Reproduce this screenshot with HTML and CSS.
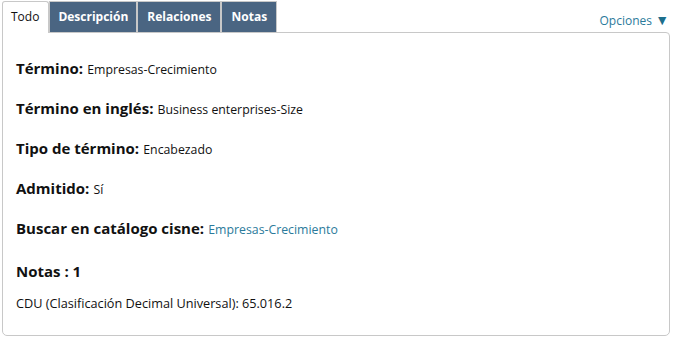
FILE: index.html
```html
<!DOCTYPE html>
<html lang="es">
<head>
<meta charset="utf-8">
<link rel="stylesheet" href="styles.css">
</head>
<body>
<div class="wrap">
  <div class="tabbar">
    <ul class="tabs">
      <li class="tab active">Todo</li>
      <li class="tab desc">Descripción</li>
      <li class="tab">Relaciones</li>
      <li class="tab">Notas</li>
    </ul>
    <a class="options" href="#">Opciones <span class="tri">▼</span></a>
  </div>
  <div class="panel">
    <p class="row"><span class="lbl">Término:</span> <span class="val">Empresas-Crecimiento</span></p>
    <p class="row"><span class="lbl">Término en inglés:</span> <span class="val">Business enterprises-Size</span></p>
    <p class="row"><span class="lbl">Tipo de término:</span> <span class="val">Encabezado</span></p>
    <p class="row"><span class="lbl">Admitido:</span> <span class="val">Sí</span></p>
    <p class="row"><span class="lbl">Buscar en catálogo cisne:</span> <a class="val link" href="#">Empresas-Crecimiento</a></p>
    <h3 class="notes-h">Notas : 1</h3>
    <p class="note">CDU (Clasificación Decimal Universal): 65.016.2</p>
  </div>
</div>
</body>
</html>
```
FILE: styles.css
```css
html, body { margin: 0; padding: 0; background: #fff; }
body { font-family: "Open Sans", Lato, sans-serif; color: #111; }
.wrap { width: 668px; padding: 1px 0 0 2px; }
.tabbar { display: flex; align-items: flex-end; justify-content: space-between; height: 31px; }
.tabs { display: flex; list-style: none; margin: 0; padding: 0; height: 31px; }
.tab {
  box-sizing: border-box; height: 31px; padding: 0 9px; line-height: 30px;
  font-size: 12px; font-weight: bold; color: #fff; background: #4a6582;
  border: 1px solid #c8c8c8; border-bottom: none;
}
.tab.desc { padding: 0 8px; }
.tab.active {
  background: #fff; color: #111; font-weight: normal; height: 32px;
  margin-bottom: -1px; position: relative; z-index: 1; padding: 0 9px 0 8px;
  border-radius: 3px 3px 0 0;
}
.options { font-size: 12px; color: #2b7a9b; text-decoration: none; margin-bottom: 3px; margin-right: 1px; }
.options .tri { color: #1d6f8c; font-size: 14px; line-height: 14px; }
.panel {
  border: 1px solid #c8c8c8; border-radius: 0 4px 5px 5px;
  height: 304px; box-sizing: border-box; padding: 26px 13px 0 13px;
}
.row { margin: 0 0 20px 0; line-height: 19px; }
.lbl { font-size: 15px; font-weight: bold; }
.val { font-size: 12.3px; }
.link { color: #2b7a9b; text-decoration: none; }
.notes-h { font-size: 15px; margin: 23px 0 13px 0; line-height: 19px; }
.note { font-size: 12.7px; margin: 0; }
```
